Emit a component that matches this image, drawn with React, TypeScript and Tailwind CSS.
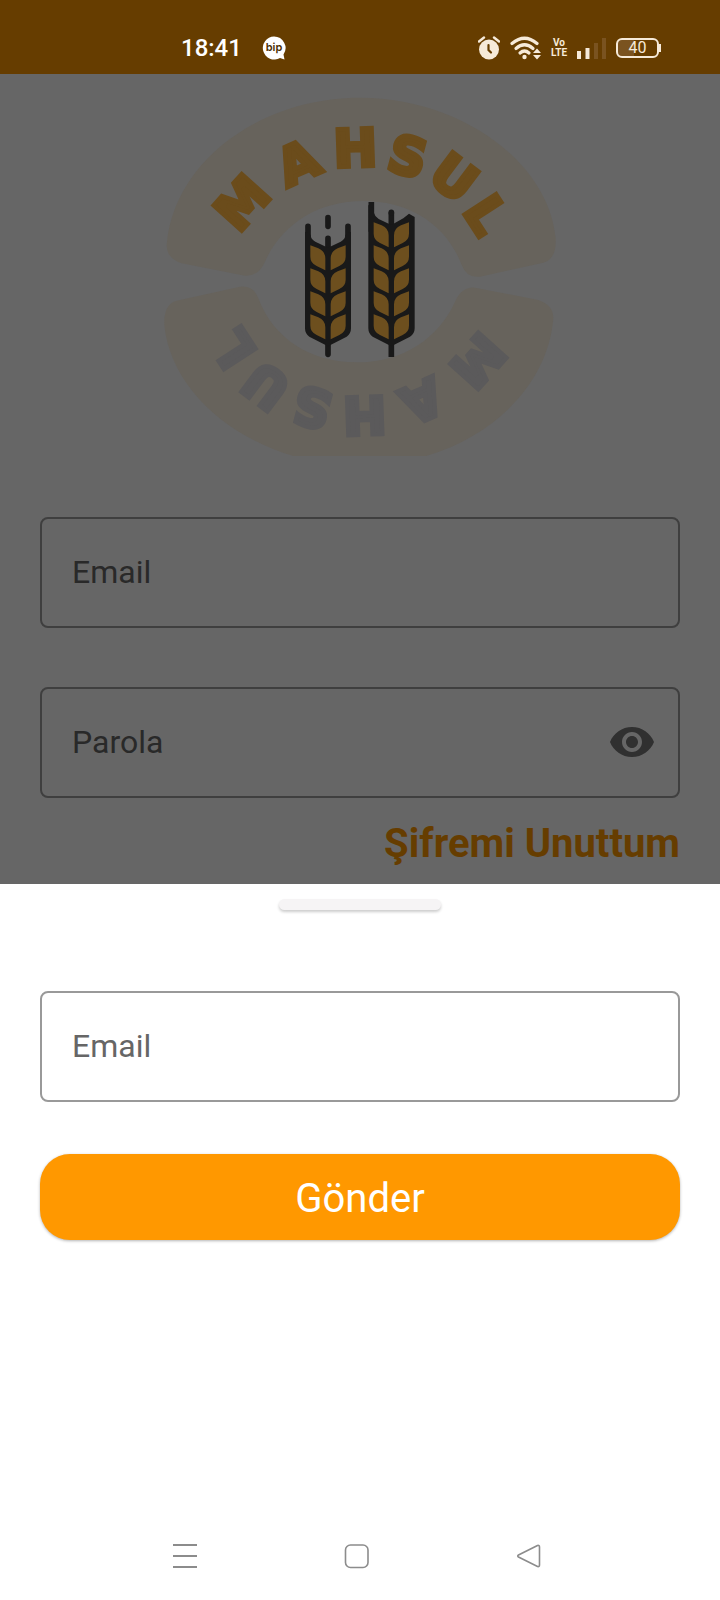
import { useState } from "react";
import type { ReactNode } from "react";

type Glyph = { cx: number; cy: number; angle: number; advance: number };

const FONT_SIZE = 156;
const CAP_HEIGHT = 0.729;

// Centre, tilt and advance (in em) of each letter of the arched word.
const ARCH: Glyph[] = [
  { cx: 275, cy: 352, angle: -48, advance: 0.995 },
  { cx: 443, cy: 231, angle: -24, advance: 0.774 },
  { cx: 616, cy: 188, angle: -2, advance: 0.837 },
  { cx: 774, cy: 212, angle: 15, advance: 0.72 },
  { cx: 913, cy: 276, angle: 37, advance: 0.812 },
  { cx: 1010, cy: 388, angle: 57, advance: 0.637 },
];

const archOrigins = ARCH.map(({ cx, cy, angle, advance }) => {
  const a = (angle * Math.PI) / 180;
  const dx = (-advance * FONT_SIZE) / 2;
  const dy = (CAP_HEIGHT * FONT_SIZE) / 2;
  return {
    x: cx + dx * Math.cos(a) - dy * Math.sin(a),
    y: cy + dx * Math.sin(a) + dy * Math.cos(a),
  };
});

function ArchedWord({ color }: { color: string }) {
  return (
    <text
      x={archOrigins.map((p) => p.x.toFixed(1)).join(" ")}
      y={archOrigins.map((p) => p.y.toFixed(1)).join(" ")}
      rotate={ARCH.map((g) => g.angle).join(" ")}
      fontSize={FONT_SIZE}
      fill={color}
      stroke={color}
      strokeWidth="13"
      className="font-['DejaVu_Sans',sans-serif] font-bold"
    >
      MAHSUL
    </text>
  );
}

const BAND =
  "M50 480C70 230 330 38 630 38C930 38 1195 230 1217 460Q1220 522 1180 533L990 575Q950 580 935 540C890 420 780 348 640 348C500 348 395 420 345 530Q325 575 285 572L95 535Q50 520 50 480Z";
const LEAF = "M481 481L505 490Q526 499 526 520V556L500 543Q481 534 481 515Z";

function Leaves({ from, count }: { from: number; count: number }) {
  return (
    <g fill="#6d4f1e">
      {Array.from({ length: count }, (_, i) => (
        <g key={i} transform={`translate(0 ${(from + i) * 69})`}>
          <path d={LEAF} />
          <path d={LEAF} transform="translate(1068 0) scale(-1 1)" />
        </g>
      ))}
    </g>
  );
}

function Logo() {
  return (
    <svg viewBox="0 0 1260 1140" className="h-[380px] w-[420px]" role="img" aria-label="Mahsul">
      <defs>
        <clipPath id="logo-edge">
          <rect width="1260" height="1113" />
        </clipPath>
      </defs>
      <g clipPath="url(#logo-edge)">
        <path d={BAND} fill="#67635c" />
        <ArchedWord color="#6b4c1b" />
        <g transform="rotate(180 630 590)">
          <path d={BAND} fill="#67635c" />
          <ArchedWord color="#5b5a5b" />
        </g>
      </g>
      <g stroke="#191919" strokeWidth="17" strokeLinecap="round" fill="none">
        <path d="M534 398V424M534 460V500M474 424V500M594 424V500M534 770V808" />
        <path
          d="M465 440L482 450Q482 462 496 470L534 488L572 470Q586 462 586 450L603 440V730Q603 746 590 755L534 784L478 755Q465 746 465 730Z"
          fill="#191919"
          stroke="none"
        />
      </g>
      <Leaves from={0} count={4} />
      <g transform="translate(190 0)">
        <g stroke="#191919" strokeWidth="17" fill="none">
          <path d="M474 351V440M534 382V430M534 770V816" />
          <path d="M534 382V384" strokeLinecap="round" />
          <path
            d="M465 360L482 370V384Q484 394 496 402L534 420L570 400L587 386L604 396V730Q604 746 590 755L534 784L478 755Q465 746 465 730Z"
            fill="#191919"
            stroke="none"
          />
        </g>
        <Leaves from={-1} count={5} />
      </g>
    </svg>
  );
}

function StatusBar() {
  return (
    <header className="flex h-[74px] items-center justify-between bg-[#663d00] pt-[22px] pr-[59px] pl-[181px] font-[Roboto,sans-serif] text-[#f6ead9]">
      <div className="flex items-center gap-5">
        <time className="text-2xl font-medium text-white">18:41</time>
        <svg viewBox="0 0 24 25" className="h-[25px] w-6" role="img" aria-label="bip">
          <path d="M12 0.500a11.500 11.500 0 1 0 6 21.500L22.500 23.500 21.500 18.500A11.500 11.500 0 0 0 12 0.500Z" fill="#fff" />
          <text
            x="12"
            y="15"
            textAnchor="middle"
            fontSize="11"
            fill="#4a2d00"
            className="font-[Inter,sans-serif] font-semibold"
          >
            bip
          </text>
        </svg>
      </div>
      <div className="flex items-center gap-[10px]">
        <svg viewBox="0 0 22 24" className="h-6 w-[22px]" aria-hidden="true">
          <circle cx="11" cy="13.5" r="10" fill="currentColor" />
          <path d="M1 5.5 6 1.5M21 5.5 16 1.5" stroke="currentColor" strokeWidth="2.4" strokeLinecap="round" />
          <path d="M10.500 9V14l2.500 2.500" stroke="#663d00" strokeWidth="2.2" fill="none" strokeLinecap="round" />
        </svg>
        <svg viewBox="0 0 31 24" className="h-6 w-[31px]" aria-hidden="true">
          <g fill="none" stroke="currentColor" strokeWidth="3.200" strokeLinecap="round">
            <path d="M2 7.500Q14.500-3 27 7.500" />
            <path d="M6 12.500Q14.500 5 23 12.500" />
            <path d="M10 17Q14.500 13 19 17" />
          </g>
          <circle cx="14.500" cy="21" r="2.200" fill="currentColor" />
          <path d="M23 17h8L27 12.500ZM23 19h8L27 23.500Z" fill="currentColor" />
        </svg>
        <div className="flex w-4 flex-col items-center font-[Roboto,sans-serif] text-[10px] leading-[10px] font-bold">
          <span>Vo</span>
          <span>LTE</span>
        </div>
        <svg viewBox="0 0 29 22" className="h-[22px] w-[29px]" aria-hidden="true">
          <path d="M0 14h4v8H0zM8.500 11h4v11h-4z" fill="currentColor" />
          <path d="M17 6h4v16h-4zM25 1h4v21h-4z" fill="#7a5320" />
        </svg>
        <div className="flex items-center">
          <div className="flex h-5 w-[43px] items-center justify-center rounded-md border-2 border-current bg-linear-to-r from-[#7a5320] from-40% to-[#663d00] to-40% text-base leading-4">
            40
          </div>
          <div className="h-2 w-[2px] bg-current" />
        </div>
      </div>
    </header>
  );
}

type FieldProps = {
  label: string;
  type: string;
  dimmed?: boolean;
  children?: ReactNode;
};

function Field({ label, type, dimmed, children }: FieldProps) {
  return (
    <div
      className={
        dimmed
          ? "flex h-[111px] items-center rounded-lg border-2 border-[#3f3f3f] pr-[22px] pb-[2px] pl-[30px]"
          : "flex h-[111px] items-center rounded-lg border-2 border-[#999999] pr-[22px] pb-[2px] pl-[30px]"
      }
    >
      <input
        type={type}
        aria-label={label}
        placeholder={label}
        className={
          dimmed
            ? "h-full min-w-0 flex-1 bg-transparent text-[32px] text-[#292929] outline-none placeholder:text-[#292929]"
            : "h-full min-w-0 flex-1 bg-transparent text-[32px] text-[#666666] outline-none placeholder:text-[#666666]"
        }
      />
      {children}
    </div>
  );
}

export default function App() {
  const [visible, setVisible] = useState(false);

  return (
    <div className="flex min-h-screen flex-col bg-white font-[Roboto,sans-serif]">
      <StatusBar />
      <main className="flex flex-col bg-[#666666] px-10 pt-[11px] pb-4">
        <div className="flex justify-center">
          <Logo />
        </div>
        <div className="mt-[52px] flex flex-col gap-[59px]">
          <Field label="Email" type="email" dimmed />
          <Field label="Parola" type={visible ? "text" : "password"} dimmed>
            <button type="button" aria-label="Parolayı göster" onClick={() => setVisible(!visible)}>
              <svg viewBox="0 0 24 24" className="size-12" fill="#303030" aria-hidden="true">
                <path d="M12 4.500C7 4.500 2.730 7.610 1 12c1.730 4.390 6 7.500 11 7.500s9.270-3.110 11-7.500c-1.730-4.390-6-7.500-11-7.500zM12 17c-2.760 0-5-2.240-5-5s2.240-5 5-5 5 2.240 5 5-2.240 5-5 5zm0-8c-1.660 0-3 1.340-3 3s1.340 3 3 3 3-1.340 3-3-1.340-3-3-3z" />
              </svg>
            </button>
          </Field>
        </div>
        <a href="#reset" className="mt-[22px] self-end text-[40px] leading-[48px] font-bold text-[#663d00]">
          Şifremi Unuttum
        </a>
      </main>
      <section id="reset" className="flex flex-1 flex-col px-10 pt-[15px]">
        <div className="h-[11px] w-[162px] self-center rounded-md bg-[#f6f4f5] shadow-[0_2px_3px_rgba(0,0,0,0.2)]" />
        <form className="mt-[81px] flex flex-col gap-[52px]" onSubmit={(e) => e.preventDefault()}>
          <Field label="Email" type="email" />
          <button
            type="submit"
            className="h-[86px] rounded-[30px] bg-[#ff9800] pt-1 text-[40px] text-white shadow-[0_1px_3px_rgba(0,0,0,0.3)]"
          >
            Gönder
          </button>
        </form>
      </section>
      <nav className="flex items-center justify-center gap-[146px] pr-[6px] pb-[31px] text-[#8c8c8c]">
        <button type="button" aria-label="Son uygulamalar">
          <svg viewBox="0 0 26 26" className="size-[26px]" fill="none" stroke="currentColor" strokeWidth="2">
            <path d="M1 2h24M1 13h24M1 24h24" />
          </svg>
        </button>
        <button type="button" aria-label="Ana ekran">
          <svg viewBox="0 0 26 26" className="size-[26px]" fill="none" stroke="currentColor" strokeWidth="1.600">
            <rect x="1.500" y="2" width="22.500" height="22.500" rx="5" />
          </svg>
        </button>
        <button type="button" aria-label="Geri">
          <svg viewBox="0 0 26 26" className="size-[26px]" fill="none" stroke="currentColor" strokeWidth="1.600">
            <path d="M21.500 2.500 2.500 12Q1 13 2.500 14L21.500 23.500Q23.500 24 23.500 22V4Q23.500 2 21.500 2.500Z" />
          </svg>
        </button>
      </nav>
    </div>
  );
}
